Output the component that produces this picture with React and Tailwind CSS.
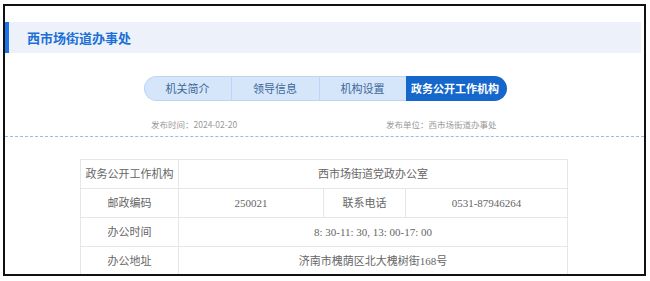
export default function App() {
  const sans = { fontFamily: '"Noto Sans CJK SC", "Noto Sans", sans-serif' };
  const serif = { fontFamily: '"Liberation Serif", "Noto Sans CJK SC", serif' };
  const tabs = [
    { t: "机关简介", w: "w-[87px]" },
    { t: "领导信息", w: "w-[88px]" },
    { t: "机构设置", w: "w-[87px]" },
  ];
  const td = "border border-[#e6e6e6] text-center text-[11px] text-[#666] p-0";
  return (
    <div className="w-[650px] h-[281px] bg-white overflow-hidden" style={sans}>
      <div className="ml-[3px] mt-[4px] w-[643px] h-[272px] border-2 border-[#111] overflow-hidden">
        <div className="mt-[16px] mr-[3px] h-[31px] bg-[#edf2fa] border-l-4 border-[#1a73e8] flex items-center pl-[18px]">
          <span className="text-[13px] font-bold text-[#1b6fd6] leading-none">西市场街道办事处</span>
        </div>
        <div className="mt-[23px] flex justify-center">
          <div className="flex h-[25px] ml-[1px]">
            {tabs.map((x, i) => (
              <div
                key={i}
                className={`${x.w} flex items-center justify-center bg-[#d5e6fb] border-y border-[#bcd5f5] text-[11px] text-[#3f6796] ${i === 0 ? "rounded-l-full border-l" : "border-l"}`}
              >
                {x.t}
              </div>
            ))}
            <div className="w-[101px] flex items-center justify-center bg-[#1567cc] rounded-r-full text-[11px] font-bold text-white pr-[2px]">
              政务公开工作机构
            </div>
          </div>
        </div>
        <div className="mt-[16px] flex pl-[146px] text-[8.5px] text-[#999] h-[14px] items-center leading-none">
          <span className="w-[235px]">发布时间：2024-02-20</span>
          <span>发布单位：西市场街道办事处</span>
        </div>
        <div className="mt-[5px] border-b border-dashed border-[#8ebfee]" />
        <table className="mt-[22px] ml-[75px] w-[487px] border-collapse table-fixed" style={serif}>
          <colgroup>
            <col className="w-[98px]" />
            <col className="w-[145px]" />
            <col className="w-[82px]" />
            <col className="w-[162px]" />
          </colgroup>
          <tbody>
            <tr className="h-[29px]">
              <td className={td}>政务公开工作机构</td>
              <td className={td} colSpan={3}>西市场街道党政办公室</td>
            </tr>
            <tr className="h-[29px]">
              <td className={td}>邮政编码</td>
              <td className={td}>250021</td>
              <td className={td}>联系电话</td>
              <td className={td}>0531-87946264</td>
            </tr>
            <tr className="h-[29px]">
              <td className={td}>办公时间</td>
              <td className={td} colSpan={3}>8: 30-11: 30, 13: 00-17: 00</td>
            </tr>
            <tr className="h-[29px]">
              <td className={td}>办公地址</td>
              <td className={td} colSpan={3}>济南市槐荫区北大槐树街168号</td>
            </tr>
          </tbody>
        </table>
      </div>
    </div>
  );
}
